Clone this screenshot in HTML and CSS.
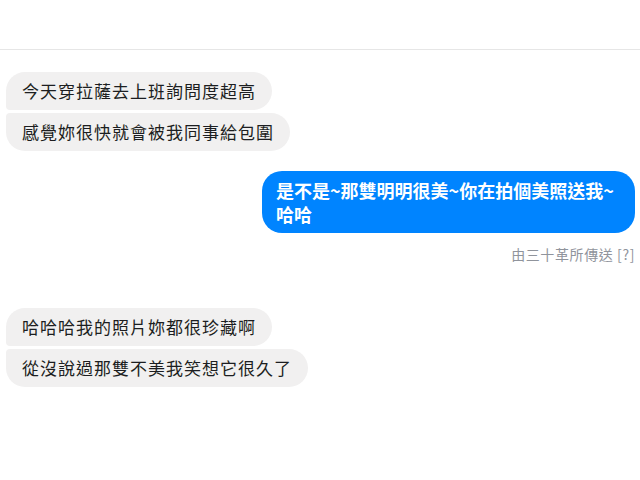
FILE: index.html
```html
<!DOCTYPE html>
<html lang="zh-Hant">
<head>
<meta charset="utf-8">
<link rel="stylesheet" href="styles.css">
</head>
<body>
<div class="chat">
  <div class="header"></div>
  <div class="group in first-group">
    <div class="bubble gray top">今天穿拉薩去上班詢問度超高</div>
    <div class="bubble gray bottom">感覺妳很快就會被我同事給包圍</div>
  </div>
  <div class="group out">
    <div class="bubble blue">是不是~那雙明明很美~你在拍個美照送我~哈哈</div>
    <div class="meta">由三十革所傳送 [?]</div>
  </div>
  <div class="group in second-group">
    <div class="bubble gray top">哈哈哈我的照片妳都很珍藏啊</div>
    <div class="bubble gray bottom">從沒說過那雙不美我笑想它很久了</div>
  </div>
</div>
</body>
</html>
```
FILE: styles.css
```css
html, body {
  margin: 0;
  padding: 0;
  background: #ffffff;
}
body {
  font-family: "Noto Sans CJK TC", "Noto Sans", sans-serif;
  width: 640px;
  height: 480px;
  overflow: hidden;
}
.chat {
  display: flex;
  flex-direction: column;
}
.header {
  height: 49px;
  border-bottom: 1px solid #e6e6e6;
}
.group {
  display: flex;
  flex-direction: column;
  gap: 3px;
}
.group.in {
  align-items: flex-start;
  padding-left: 6px;
}
.group.out {
  align-items: flex-end;
  padding-right: 5px;
  margin-top: 20px;
}
.first-group {
  margin-top: 22px;
}
.second-group {
  margin-top: 45px;
}
.bubble {
  box-sizing: border-box;
}
.gray {
  background: #f1f0f0;
  color: #1c1e21;
  font-size: 17px;
  letter-spacing: 1px;
  line-height: 20px;
  padding: 9px 16px 9px 16px;
}
.gray.top {
  border-radius: 19px 19px 19px 4px;
}
.gray.bottom {
  border-radius: 4px 19px 19px 19px;
}
.blue {
  background: #0084ff;
  color: #ffffff;
  font-size: 18px;
  font-weight: 700;
  line-height: 24px;
  padding: 7px 14px;
  width: 373px;
  border-radius: 20px;
}
.meta {
  margin-top: 9px;
  margin-right: 0;
  font-size: 14px;
  letter-spacing: 0.6px;
  line-height: 18px;
  color: #90949c;
}
```
